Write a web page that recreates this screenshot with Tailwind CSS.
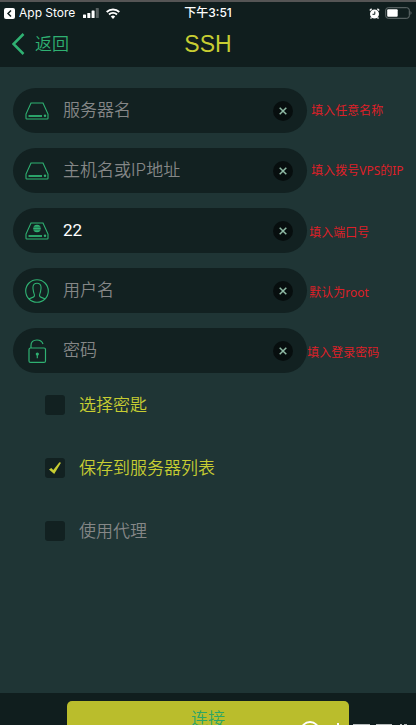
<!DOCTYPE html>
<html lang="zh-CN">
<head>
<meta charset="utf-8">
<meta name="viewport" content="width=device-width, initial-scale=1">
<title>SSH</title>
<script src="https://cdn.jsdelivr.net/npm/@tailwindcss/browser@4"></script>
</head>
<body class="flex h-screen flex-col overflow-hidden bg-[#1f3535] font-['Inter','Noto_Sans_CJK_SC',sans-serif]">
<svg class="hidden">
  <symbol id="drive" viewBox="0 0 24 18"><path d="M6 1h12l5 11v4.2a.8.8 0 0 1-.8.8H1.8a.8.8 0 0 1-.8-.8V12z" fill="none" stroke="currentColor" stroke-width="1.1"/><path d="M3.500 14h13.500" stroke="currentColor" stroke-width="1.800"/><circle cx="20" cy="13.800" r="1.200" fill="currentColor"/></symbol>
</svg>

<header class="shrink-0 border-t-2 border-[#555] bg-[#101e1e]">
  <div class="grid h-[22px] grid-cols-[1fr_auto_1fr] items-center pl-1 pr-1 text-white">
    <div class="flex items-center">
      <svg class="size-[11px]" viewBox="0 0 11 11"><rect width="11" height="11" rx="2" fill="#fff"/><path d="M7 2.500 4 5.500l3 3" fill="none" stroke="#101e1e" stroke-width="1.500"/></svg>
      <span class="ml-1 text-[12px] leading-4">App Store</span>
      <svg class="ml-2 h-[10px] w-4" viewBox="0 0 16 10" fill="#fff"><rect y="6.500" width="3" height="3.500" rx=".6"/><rect x="4.300" y="5" width="3" height="5" rx=".6"/><rect x="8.600" y="2.500" width="3" height="7.500" rx=".6"/><rect x="12.800" width="3" height="10" rx=".6" opacity=".3"/></svg>
      <svg class="ml-[7px] h-[11px] w-[14px]" viewBox="0 0 14 11" fill="none" stroke="#fff" stroke-width="1.900"><path d="M.7 4a9 9 0 0 1 12.600 0M3 6.500a5.700 5.700 0 0 1 8 0"/><path d="M7 11 4.800 8.600a3.200 3.200 0 0 1 4.400 0z" fill="#fff" stroke="none"/></svg>
    </div>
    <time class="text-[12px] font-medium leading-4">下午3:51</time>
    <div class="flex items-center justify-end gap-[5px]">
      <svg class="size-[11px]" viewBox="0 0 11 11"><circle cx="5.500" cy="6" r="4.500" fill="#fff"/><path d="M.8 2.500 2.600.8M10.200 2.500 8.400.8M2.500 9.500l-1 1M8.500 9.500l1 1" stroke="#fff" stroke-width="1.400"/><path d="M5.800 3.500v2.800H3.500" fill="none" stroke="#101e1e"/></svg>
      <svg class="h-3 w-[27px]" viewBox="0 0 27 12"><rect x=".7" y=".7" width="23.600" height="10.600" rx="2.500" fill="none" stroke="#666f6f"/><rect x="2.200" y="2.200" width="10.500" height="7.600" rx="1" fill="#fff"/><path d="M25.500 4q2 2 0 4z" fill="#666f6f"/></svg>
    </div>
  </div>
  <div class="grid h-[43px] grid-cols-[1fr_auto_1fr] items-center px-3 pb-1">
    <a href="#" class="flex items-center gap-[10px] text-[17px] font-[350] leading-6 text-[#2fb172]">
      <svg class="h-[22px] w-[13px]" viewBox="0 0 13 22"><path d="M11.500 1 1.500 11l10 10" fill="none" stroke="currentColor" stroke-width="2.500"/></svg>返回</a>
    <h1 class="font-['Liberation_Sans',sans-serif] text-[23px] leading-7 text-[#c7cd32]">SSH</h1>
  </div>
</header>

<main class="flex-1 pl-[13px] pt-[21px]">
  <form id="login">
  <div class="flex flex-col gap-[15px] text-[17px] font-[350]">
    <div class="flex items-center gap-1">
      <div class="flex h-[45px] w-[73%] shrink-0 items-center rounded-full bg-[#122121] pl-3 pr-[14px]">
        <label for="name" aria-label="服务器名"><svg class="h-[18px] w-6 text-[#2fb172]"><use href="#drive"/></svg></label>
        <input id="name" placeholder="服务器名" class="ml-[14px] min-w-0 flex-1 bg-transparent text-white outline-none placeholder:text-[#858787]">
        <button type="button" aria-label="清除" class="flex size-5 items-center justify-center rounded-full bg-[#070e0e] text-[#8fbaa4]"><svg class="size-2" viewBox="0 0 8 8"><path d="m.7.7 6.600 6.600m0-6.600L.7 7.300" stroke="currentColor" stroke-width="1.500"/></svg></button>
      </div>
      <span class="whitespace-nowrap text-[12px] leading-4 font-normal text-[#de2028] font-['Noto_Sans','Noto_Sans_CJK_SC',sans-serif]">填入任意名称</span>
    </div>
    <div class="flex items-center gap-1">
      <div class="flex h-[45px] w-[73%] shrink-0 items-center rounded-full bg-[#122121] pl-3 pr-[14px]">
        <label for="host" aria-label="主机名或IP地址"><svg class="h-[18px] w-6 text-[#2fb172]"><use href="#drive"/></svg></label>
        <input id="host" placeholder="主机名或IP地址" class="ml-[14px] min-w-0 flex-1 bg-transparent text-white outline-none placeholder:text-[#858787]">
        <button type="button" aria-label="清除" class="flex size-5 items-center justify-center rounded-full bg-[#070e0e] text-[#8fbaa4]"><svg class="size-2" viewBox="0 0 8 8"><path d="m.7.7 6.600 6.600m0-6.600L.7 7.300" stroke="currentColor" stroke-width="1.500"/></svg></button>
      </div>
      <span class="whitespace-nowrap text-[12px] leading-4 font-normal text-[#de2028] font-['Noto_Sans','Noto_Sans_CJK_SC',sans-serif]">填入拨号VPS的IP</span>
    </div>
    <div class="flex items-center gap-[2px]">
      <div class="flex h-[45px] w-[73%] shrink-0 items-center rounded-full bg-[#122121] pl-3 pr-[14px]">
        <label for="port" aria-label="端口"><svg class="h-[18px] w-6 text-[#2fb172]" viewBox="0 0 24 18"><use href="#drive"/><circle cx="12" cy="6.500" r="3.800" fill="currentColor"/><path d="M8 5.200h8M8 7.800h8" stroke="#122121" stroke-width=".5"/></svg></label>
        <input id="port" value="22" class="ml-[14px] min-w-0 flex-1 bg-transparent font-['Roboto','Noto_Sans_CJK_SC',sans-serif] font-normal text-white outline-none">
        <button type="button" aria-label="清除" class="flex size-5 items-center justify-center rounded-full bg-[#070e0e] text-[#8fbaa4]"><svg class="size-2" viewBox="0 0 8 8"><path d="m.7.7 6.600 6.600m0-6.600L.7 7.300" stroke="currentColor" stroke-width="1.500"/></svg></button>
      </div>
      <span class="whitespace-nowrap pt-1 text-[12px] leading-4 font-normal text-[#de2028] font-['Noto_Sans','Noto_Sans_CJK_SC',sans-serif]">填入端口号</span>
    </div>
    <div class="flex items-center gap-[2px]">
      <div class="flex h-[45px] w-[73%] shrink-0 items-center rounded-full bg-[#122121] pl-3 pr-[14px]">
        <label for="user" aria-label="用户名"><svg class="size-6 text-[#2fb172]" viewBox="0 0 24 24" fill="none" stroke="currentColor" stroke-width="1.100"><circle cx="12" cy="12" r="11.300"/><path d="M4 20c1.500-1.200 5-1.400 5.400-3 .4-1.600-.6-2.300-.9-4.300-.3-1.700-.7-3.300-.5-5C8.300 5.200 9.500 4.200 12 4.200s3.700 1 4 3.500c.2 1.700-.2 3.300-.5 5-.3 2-1.300 2.700-.9 4.300.4 1.600 3.900 1.800 5.400 3"/></svg></label>
        <input id="user" placeholder="用户名" class="ml-[14px] min-w-0 flex-1 bg-transparent text-white outline-none placeholder:text-[#858787]">
        <button type="button" aria-label="清除" class="flex size-5 items-center justify-center rounded-full bg-[#070e0e] text-[#8fbaa4]"><svg class="size-2" viewBox="0 0 8 8"><path d="m.7.7 6.600 6.600m0-6.600L.7 7.300" stroke="currentColor" stroke-width="1.500"/></svg></button>
      </div>
      <span class="whitespace-nowrap pt-1 text-[12px] leading-4 font-normal text-[#de2028] font-['Noto_Sans','Noto_Sans_CJK_SC',sans-serif]">默认为root</span>
    </div>
    <div class="flex items-center">
      <div class="flex h-[45px] w-[73%] shrink-0 items-center rounded-full bg-[#122121] pl-3 pr-[14px]">
        <label for="pass" aria-label="密码"><svg class="size-6 text-[#2fb172]" viewBox="0 0 24 24" fill="none" stroke="currentColor" stroke-width="1.200"><rect x="4" y="9" width="16.500" height="14.400" rx="1.500"/><path d="M6 9V6.500C6 3 8.500 1 12 1c3 0 5 1.200 6 4"/><circle cx="12.300" cy="15" r="1" fill="currentColor"/><path d="M12.300 15v4.300"/></svg></label>
        <input id="pass" type="password" placeholder="密码" class="ml-[14px] min-w-0 flex-1 bg-transparent text-white outline-none placeholder:text-[#858787]">
        <button type="button" aria-label="清除" class="flex size-5 items-center justify-center rounded-full bg-[#070e0e] text-[#8fbaa4]"><svg class="size-2" viewBox="0 0 8 8"><path d="m.7.7 6.600 6.600m0-6.600L.7 7.300" stroke="currentColor" stroke-width="1.500"/></svg></button>
      </div>
      <span class="whitespace-nowrap pt-1 text-[12px] leading-4 font-normal text-[#de2028] font-['Noto_Sans','Noto_Sans_CJK_SC',sans-serif]">填入登录密码</span>
    </div>
  </div>

  <div class="mt-5 flex flex-col gap-[39px] pl-8 text-[17px] font-[350] leading-6">
    <label class="flex items-center gap-[14px] text-[#c7cd32]"><input type="checkbox" class="size-5 appearance-none rounded-[3px] bg-[#122121]">选择密匙</label>
    <label class="flex items-center gap-[14px] text-[#c7cd32]">
      <span class="grid size-5"><input type="checkbox" checked class="col-start-1 row-start-1 size-5 appearance-none rounded-[3px] bg-[#122121]"><svg class="pointer-events-none col-start-1 row-start-1 size-3 place-self-center" viewBox="0 0 12 12"><path d="M0 7.600 2.300 5.900l2 2L10.400.2l1.600.6-6.800 11.200z" fill="currentColor"/></svg></span>保存到服务器列表</label>
    <label class="flex items-center gap-[14px] text-[#858787]"><input type="checkbox" class="size-5 appearance-none rounded-[3px] bg-[#122121]">使用代理</label>
  </div>
  </form>
</main>

<footer class="relative h-8 shrink-0 overflow-hidden bg-[#101e1e] pt-2">
  <button form="login" class="mx-auto block h-11 w-[68%] rounded-[5px] bg-[#babd2c] pb-2 text-[17px] font-[350] leading-9 text-[#2ba568]">连接</button>
  <svg class="pointer-events-none absolute bottom-0 right-0 h-1 w-[116px]" viewBox="0 0 116 4" fill="none" stroke="#fff"><circle cx="10" cy="10" r="9" stroke-width="1.800"/><path d="M38 2v2" stroke-width="2"/><path d="M53 3.500h17M76 3.500h16M100 3.500h2M104 3.500h3" opacity=".7"/></svg>
</footer>
</body>
</html>
